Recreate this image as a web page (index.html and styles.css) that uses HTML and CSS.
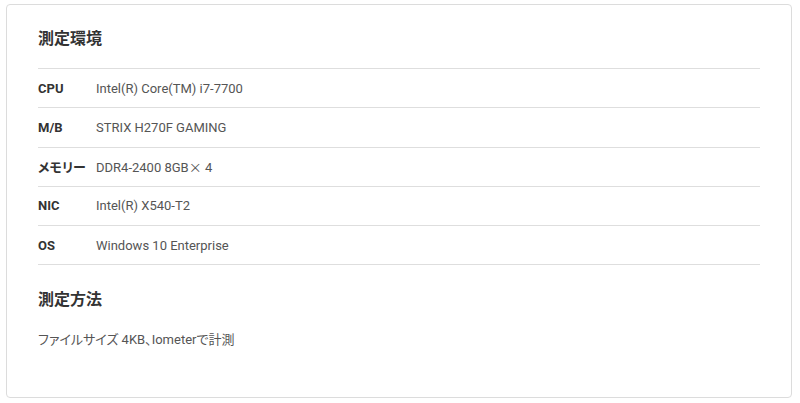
FILE: index.html
```html
<!DOCTYPE html>
<html lang="ja">
<head>
<meta charset="utf-8">
<link rel="stylesheet" href="styles.css">
</head>
<body>
<section class="card">
  <h2 class="title">測定環境</h2>
  <div class="spec">
    <div class="row"><div class="label">CPU</div><div class="value">Intel(R) Core(TM) i7-7700</div></div>
    <div class="row"><div class="label">M/B</div><div class="value">STRIX H270F GAMING</div></div>
    <div class="row"><div class="label">メモリー</div><div class="value">DDR4-2400 8GB<span class="times">×</span> 4</div></div>
    <div class="row"><div class="label">NIC</div><div class="value">Intel(R) X540-T2</div></div>
    <div class="row"><div class="label">OS</div><div class="value">Windows 10 Enterprise</div></div>
  </div>
  <h2 class="title title-second">測定方法</h2>
  <p class="note">ファイルサイズ 4KB、Iometerで計測</p>
</section>
</body>
</html>
```

FILE: styles.css
```css
html, body {
  margin: 0;
  padding: 0;
  background: #fff;
}
body {
  font-family: "Roboto", "Noto Sans CJK JP", sans-serif;
  font-feature-settings: "palt";
  color: #333;
  padding: 4px 8px 5px 6px;
}
.card {
  border: 1px solid #dcdcdc;
  border-radius: 4px;
  padding: 22px 31px 47px 31px;
  height: 394px;
  box-sizing: border-box;
}
.title {
  margin: 0;
  font-size: 16px;
  line-height: 24px;
  font-weight: 700;
  color: #333;
}
.spec {
  margin-top: 17px;
  border-top: 1px solid #dedede;
}
.row {
  display: flex;
  align-items: center;
  height: 38.25px;
  border-bottom: 1px solid #dedede;
  font-size: 13px;
}
.label {
  width: 58px;
  font-weight: 700;
  color: #333;
}
.value {
  color: #555;
}
.times {
  font-family: "Noto Sans CJK JP", sans-serif;
  font-feature-settings: normal;
}
.title-second {
  margin-top: 23px;
}
.note {
  margin: 18px 0 0;
  font-size: 13px;
  line-height: 20px;
  color: #555;
}
```
